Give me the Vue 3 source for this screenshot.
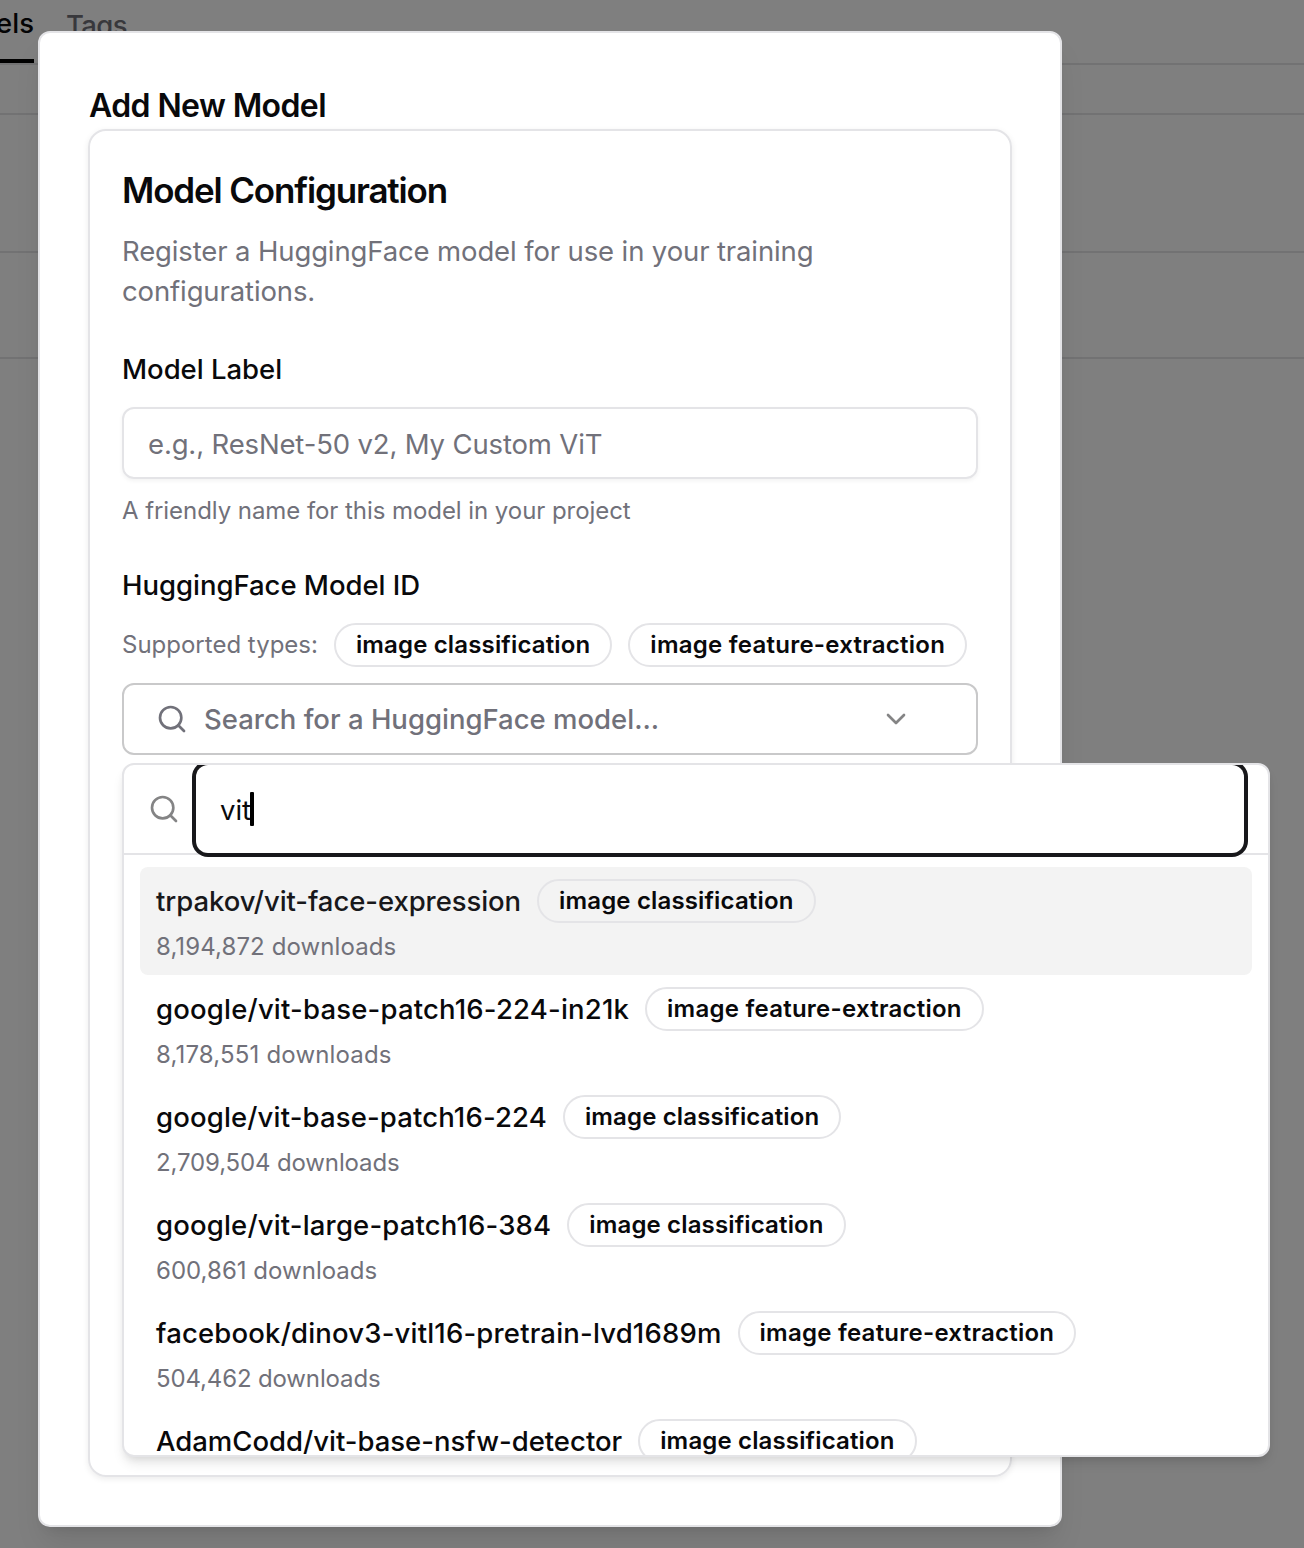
<script setup>
const models = [
  { name: 'trpakov/vit-face-expression', type: 'image classification', downloads: '8,194,872', tracking: -0.07, countTracking: 0.1 },
  { name: 'google/vit-base-patch16-224-in21k', type: 'image feature-extraction', downloads: '8,178,551', tracking: 0.19, countTracking: 0.17 },
  { name: 'google/vit-base-patch16-224', type: 'image classification', downloads: '2,709,504', tracking: 0.15, countTracking: -0.14 },
  { name: 'google/vit-large-patch16-384', type: 'image classification', downloads: '600,861', tracking: 0.17, countTracking: 0.02 },
  { name: 'facebook/dinov3-vitl16-pretrain-lvd1689m', type: 'image feature-extraction', downloads: '504,462', tracking: 0.18, countTracking: -0.14 },
  { name: 'AdamCodd/vit-base-nsfw-detector', type: 'image classification', tracking: -0.01 },
]
const typeTracking = {
  'image classification': 0.15,
  'image feature-extraction': 0.25,
}
const spacing = (px) => ({ letterSpacing: px + 'px' })
</script>

<template>
  <div class="screen">
    <div class="page">
      <nav class="tabs">
        <span class="tab active">Models</span>
        <span class="tab">Tags</span>
      </nav>
      <div class="row r1"></div>
      <div class="row r2"></div>
      <div class="row r3"></div>
    </div>

    <section class="modal">
      <h1>Add New Model</h1>
      <div class="card">
        <h2>Model Configuration</h2>
        <p class="desc">Register a HuggingFace model for use in your training<br />configurations.</p>

        <label class="label">Model Label</label>
        <div class="input">e.g., ResNet-50 v2, My Custom ViT</div>
        <p class="hint">A friendly name for this model in your project</p>

        <label class="label">HuggingFace Model ID</label>
        <div class="types">
          <span class="small">Supported types:</span>
          <span v-for="(px, t) in typeTracking" :key="t" class="badge" :style="spacing(px)">{{ t }}</span>
        </div>

        <div class="combo">
          <div class="trigger">
            <svg class="icon" viewBox="0 0 24 24"><circle cx="11" cy="11" r="8" /><path d="m21 21-4.3-4.3" /></svg>
            <span class="trigger-text">Search for a HuggingFace model...</span>
            <svg class="icon faded" viewBox="0 0 24 24"><path d="m6 9 6 6 6-6" /></svg>
          </div>

          <div class="popover">
            <div class="search">
              <svg class="icon faded" viewBox="0 0 24 24"><circle cx="11" cy="11" r="8" /><path d="m21 21-4.3-4.3" /></svg>
              <div class="query"><span class="typed">vit</span><i class="caret"></i></div>
            </div>
            <div class="list">
              <div v-for="(m, i) in models" :key="m.name" class="item" :class="{ selected: i === 0 }">
                <div class="line">
                  <span class="name" :style="spacing(m.tracking)">{{ m.name }}</span>
                  <span class="badge" :style="spacing(typeTracking[m.type])">{{ m.type }}</span>
                </div>
                <div v-if="m.downloads" class="small" :style="spacing(m.countTracking)">{{ m.downloads }} downloads</div>
              </div>
            </div>
          </div>
        </div>
      </div>
    </section>
  </div>
</template>

<style>
body { margin: 0; background: #7f7f7f; }
</style>

<style scoped>
* { box-sizing: border-box; margin: 0; }
.screen {
  position: relative;
  width: 1304px;
  height: 1548px;
  overflow: hidden;
  background: #7f7f7f;
  color: #09090b;
  font-family: Inter, "Liberation Sans", sans-serif;
  font-size: 27.5px;
  white-space: nowrap;
}
.tabs {
  display: flex;
  gap: 32px;
  height: 65px;
  border-bottom: 2px solid #727273;
}
.tab {
  height: 50px;
  line-height: 50px;
  color: #38383c;
  font-weight: 500;
  letter-spacing: -0.6px;
}
.tab.active {
  display: flex;
  justify-content: flex-end;
  width: 34px;
  height: 63px;
  line-height: 46px;
  letter-spacing: 0;
  color: #040405;
  border-bottom: 4px solid #000;
}
.row { border-bottom: 2px solid #727273; }
.r1 { height: 50px; }
.r2 { height: 138px; }
.r3 { height: 106px; }

.modal {
  position: absolute;
  left: 38px;
  top: 31px;
  width: 1024px;
  height: 1496px;
  padding: 48px;
  background: #fff;
  border: 2px solid #e4e4e7;
  border-radius: 12px;
  box-shadow: 0 20px 30px -6px rgb(0 0 0 / 0.1), 0 8px 12px -8px rgb(0 0 0 / 0.1);
}
h1 {
  height: 48px;
  padding-left: 1px;
  font-size: 32px;
  font-weight: 600;
  line-height: 50px;
  letter-spacing: -0.6px;
}
.card {
  height: 1348px;
  padding: 32px;
  border: 2px solid #e4e4e7;
  border-radius: 18px;
  box-shadow: 0 2px 6px rgb(0 0 0 / 0.08);
}
h2 { font-size: 35px; font-weight: 600; line-height: 54px; letter-spacing: -1.15px; }
.desc { margin-top: 14px; line-height: 40px; color: #71717a; letter-spacing: -0.13px; }
.label { display: block; margin-top: 44px; line-height: 28px; font-weight: 500; letter-spacing: -0.03px; }
.input {
  height: 72px;
  margin-top: 24px;
  padding-left: 24px;
  line-height: 70px;
  letter-spacing: -0.15px;
  color: #71717a;
  border: 2px solid #e4e4e7;
  border-radius: 12px;
  box-shadow: 0 2px 4px rgb(0 0 0 / 0.05);
}
.hint { margin-top: 16px; letter-spacing: -0.06px; }
.hint, .small { font-size: 24px; line-height: 32px; color: #71717a; }
.types { display: flex; align-items: center; gap: 16px; margin-top: 24px; }
.badge {
  height: 44px;
  padding: 0 20px;
  line-height: 40px;
  font-size: 24px;
  font-weight: 600;
  border: 2px solid #e4e4e7;
  border-radius: 22px;
}
.combo { position: relative; margin-top: 16px; }
.trigger {
  display: flex;
  align-items: center;
  height: 72px;
  padding: 0 64px 0 32px;
  color: #71717a;
  font-weight: 500;
  border: 2px solid #c9c9ca;
  border-radius: 12px;
}
.trigger-text { flex: 1; margin-left: 16px; }
.icon {
  flex: none;
  width: 32px;
  height: 32px;
  fill: none;
  stroke: #71717a;
  stroke-width: 2;
  stroke-linecap: round;
  stroke-linejoin: round;
}
.icon.faded { stroke: #848485; }

.popover {
  position: absolute;
  left: 0;
  top: 80px;
  width: 1148px;
  height: 694px;
  overflow: hidden;
  background: #fff;
  border: 2px solid #e4e4e7;
  border-radius: 12px;
  box-shadow: 0 8px 12px -2px rgb(0 0 0 / 0.1), 0 4px 8px -4px rgb(0 0 0 / 0.1);
}
.search {
  display: flex;
  align-items: center;
  gap: 16px;
  height: 90px;
  padding: 0 24px;
  border-bottom: 2px solid #e4e4e7;
}
.query {
  display: flex;
  flex: 1;
  align-items: center;
  height: 88px;
  padding-left: 24px;
  border-radius: 12px;
  box-shadow: 0 0 0 4px #18181b;
}
.typed { padding-top: 2px; }
.caret { width: 4px; height: 34px; margin-left: -1px; background: #000; border-radius: 1px; }
.list { padding: 12px 16px; }
.item { height: 108px; padding: 12px 16px; border-radius: 8px; }
.item.selected { background: #f3f3f3; }
.line { display: flex; align-items: center; gap: 16px; margin-bottom: 8px; }
.name { font-weight: 500; }
.selected .name { color: #18181b; }
</style>
